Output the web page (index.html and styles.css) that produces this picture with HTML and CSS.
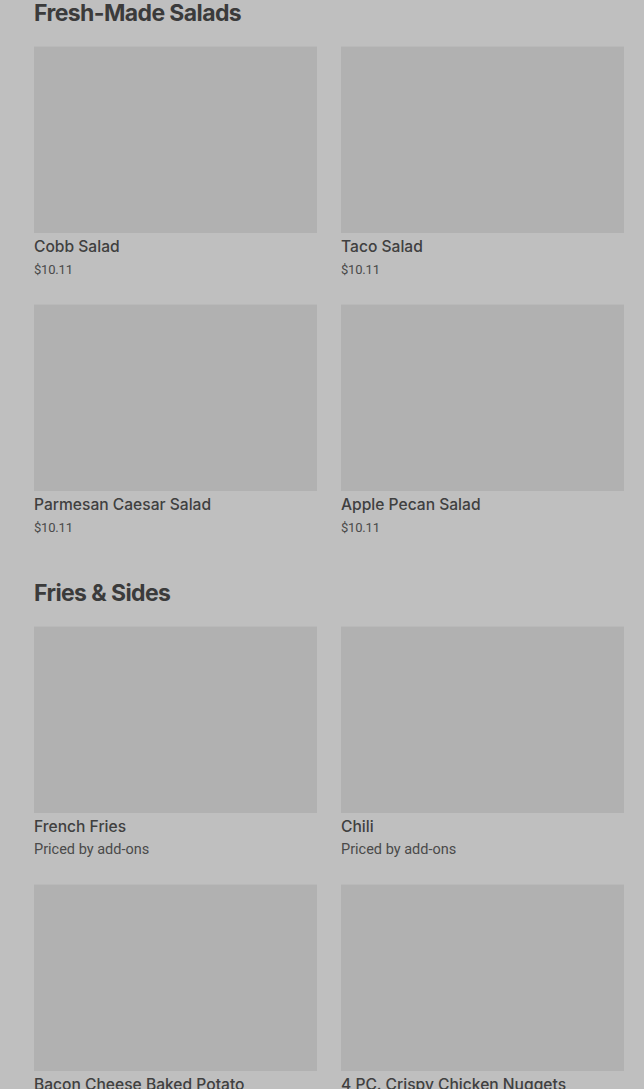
FILE: index.html
```html
<!DOCTYPE html>
<html>
<head>
<meta charset="utf-8">
<link rel="stylesheet" href="styles.css">
</head>
<body>
<main class="menu">
  <section class="category">
    <h2 class="category-title">Fresh-Made Salads</h2>
    <div class="grid">
      <div class="item"><div class="thumb"></div><div class="name">Cobb Salad</div><div class="price">$10.11</div></div>
      <div class="item"><div class="thumb"></div><div class="name">Taco Salad</div><div class="price">$10.11</div></div>
      <div class="item"><div class="thumb"></div><div class="name">Parmesan Caesar Salad</div><div class="price">$10.11</div></div>
      <div class="item"><div class="thumb"></div><div class="name">Apple Pecan Salad</div><div class="price">$10.11</div></div>
    </div>
  </section>
  <section class="category">
    <h2 class="category-title">Fries &amp; Sides</h2>
    <div class="grid">
      <div class="item"><div class="thumb"></div><div class="name">French Fries</div><div class="price alt">Priced by add-ons</div></div>
      <div class="item"><div class="thumb"></div><div class="name">Chili</div><div class="price alt">Priced by add-ons</div></div>
      <div class="item"><div class="thumb"></div><div class="name">Bacon Cheese Baked Potato</div><div class="price">$10.11</div></div>
      <div class="item"><div class="thumb"></div><div class="name">4 PC. Crispy Chicken Nuggets</div><div class="price">$10.11</div></div>
    </div>
  </section>
</main>
</body>
</html>
```
FILE: styles.css
```css
html, body {
  margin: 0;
  padding: 0;
  background: #bfbfbf;
  overflow: hidden;
}
.menu {
  padding: 0 20px 0 34px;
  margin-top: -1px;
  display: flex;
  flex-direction: column;
  gap: 42px;
}
.category-title {
  margin: 0 0 19px 0;
  font-family: Inter, "Liberation Sans", sans-serif;
  font-size: 23px;
  line-height: 28px;
  font-weight: 700;
  letter-spacing: -0.6px;
  color: #3b3b3b;
}
.grid {
  display: grid;
  grid-template-columns: 1fr 1fr;
  column-gap: 24px;
  row-gap: 25px;
}
.item {
  display: flex;
  flex-direction: column;
}
.thumb {
  height: 187px;
  background: #b1b1b1;
  box-shadow: inset 0 1px 0 #b9b9b9;
}
.name {
  margin-top: 3px;
  font-family: Inter, "Liberation Sans", sans-serif;
  font-size: 15.6px;
  line-height: 22px;
  font-weight: 500;
  color: #404040;
}
.price {
  margin-top: 3px;
  font-family: Roboto, "Liberation Sans", sans-serif;
  font-size: 13px;
  line-height: 18px;
  color: #4a4a4a;
  letter-spacing: -0.2px;
}
.price.alt {
  font-size: 14.5px;
  letter-spacing: 0;
}
```
